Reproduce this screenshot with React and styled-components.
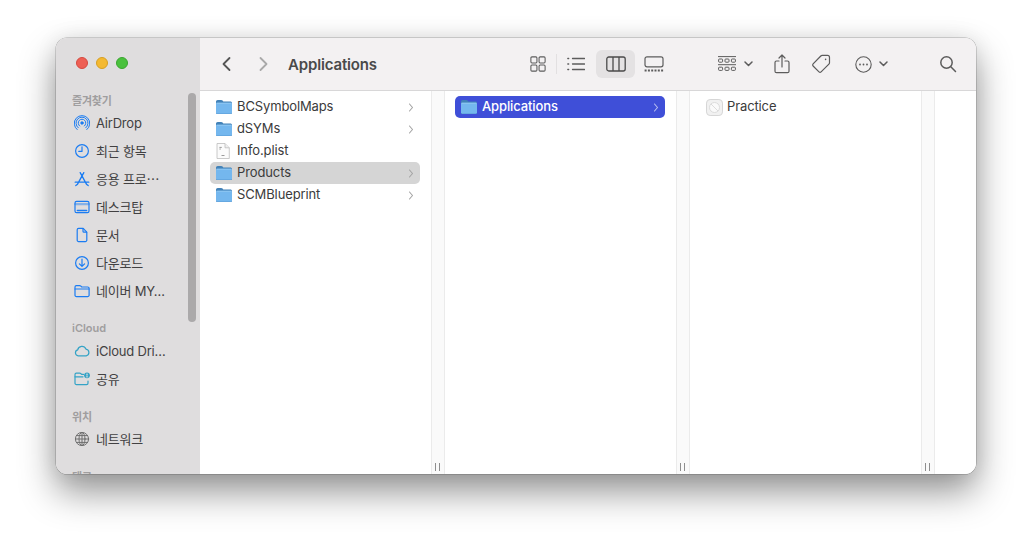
import styled, { createGlobalStyle } from "styled-components";

const GlobalStyle = createGlobalStyle`
  html, body {
    margin: 0;
    background: #fff;
    overflow: hidden;
  }
  body {
    font-family: Inter, "Noto Sans CJK KR", "Liberation Sans", sans-serif;
    -webkit-font-smoothing: antialiased;
  }
  * { box-sizing: border-box; }
`;

const Stroke = ({ size = 16, vb, color = "currentColor", width = 1.2, children }) => (
  <svg width={size} height={size} viewBox={vb || `0 0 ${size} ${size}`} fill="none" stroke={color} strokeWidth={width} strokeLinecap="round" strokeLinejoin="round">
    {children}
  </svg>
);

// sidebar icons
const AirDropIcon = () => (
  <Stroke width={1}>
    <circle cx="8" cy="8" r="1.2" fill="currentColor" />
    <path d="M5.6 11a3.8 3.8 0 1 1 4.8 0" />
    <path d="M4.2 12.8a6 6 0 1 1 7.6 0" />
    <path d="M3.2 14.6a7.8 7.8 0 1 1 9.6 0" />
  </Stroke>
);
const ClockIcon = () => (
  <Stroke>
    <circle cx="8" cy="8" r="6.4" />
    <path d="M8 3.8V8.4H4.8" />
  </Stroke>
);
const AppsIcon = () => (
  <Stroke width={1.3}>
    <path d="M9.8 1.6 3.4 13.4M6.2 1.6l6.4 11.8M1.2 11.2h13.6M1.8 14.6l1.4-1.2M14.2 14.6l-1.4-1.2" />
  </Stroke>
);
const DesktopIcon = () => (
  <Stroke>
    <rect x="1" y="2.4" width="14" height="11.2" rx="1.6" />
    <path d="M1.4 5.2h13.2" strokeWidth="2.2" opacity=".45" />
    <path d="M3.4 11.4h9.2" strokeWidth="1.5" />
  </Stroke>
);
const DocIcon = () => (
  <Stroke>
    <path d="M4.6 1.4h4.6l3.6 3.8v8a1.4 1.4 0 0 1-1.4 1.4H4.6a1.4 1.4 0 0 1-1.4-1.4V2.8a1.4 1.4 0 0 1 1.4-1.4Z" />
    <path d="M9 1.6v2.6a1 1 0 0 0 1 1h2.6" />
  </Stroke>
);
const DownloadIcon = () => (
  <Stroke>
    <circle cx="8" cy="8" r="6.4" />
    <path d="M8 4.2v7M5.4 8.8 8 11.4l2.6-2.6" />
  </Stroke>
);
const FolderLine = () => (
  <Stroke>
    <path d="M1 4a1.4 1.4 0 0 1 1.4-1.4h3.2c.6 0 .9.2 1.3.6l.8.8h6a1.4 1.4 0 0 1 1.4 1.4v6.8a1.4 1.4 0 0 1-1.4 1.4H2.4A1.4 1.4 0 0 1 1 12.2Z" />
    <path d="M1 6h14" />
  </Stroke>
);
const CloudIcon = () => (
  <Stroke>
    <path d="M4.2 12.8a3 3 0 0 1-.5-5.9 4.3 4.3 0 0 1 8.2-.8 3.4 3.4 0 0 1 .3 6.7Z" />
  </Stroke>
);
const SharedIcon = () => (
  <Stroke>
    <path d="M9.5 3.4H7.6l-.9-.9c-.3-.3-.6-.4-1-.4H2.4A1.4 1.4 0 0 0 1 3.5v8.700a1.400 1.400 0 0 0 1.400 1.400h10.200a1.400 1.400 0 0 0 1.400-1.400V10" />
    <path d="M1 5.800h8" />
    <circle cx="13" cy="4.300" r="2.900" fill="currentColor" stroke="none" />
    <circle cx="13" cy="3.300" r=".8" fill="#dfddde" stroke="none" />
    <path d="M13 4.800v1.300" stroke="#dfddde" />
  </Stroke>
);
const GlobeIcon = () => (
  <Stroke width={1}>
    <circle cx="8" cy="8" r="6.600" />
    <ellipse cx="8" cy="8" rx="3" ry="6.600" />
    <path d="M1.400 8h13.200M2.400 4.600h11.200M2.400 11.400h11.200M8 1.400v13.200" />
  </Stroke>
);

// file list icons
const FolderIcon = () => (
  <svg width="16" height="14" viewBox="0 0 16 14">
    <path d="M0 1.800C0 .8.700 0 1.700 0h3.500c.6 0 1 .2 1.400.6l.7.8h7c1 0 1.700.7 1.700 1.600v2.500H0Z" fill="#4282b8" />
    <rect x="0" y="2.700" width="16" height="11.300" rx="1.400" fill="#74b7ee" />
    <path d="M0 13c0 .6.600 1 1.400 1h13.200c.8 0 1.400-.4 1.400-1" fill="none" stroke="#4f93cb" strokeWidth=".8" />
    <path d="M.4 3.200h15.200" stroke="#9fd0f6" strokeWidth=".7" />
  </svg>
);
const PlistIcon = () => (
  <svg width="14" height="16" viewBox="0 0 14 16" fill="none">
    <path d="M1 .5h8l4.300 4.300V15.500H1Z" fill="#fbfbfb" stroke="#bcbcbc" strokeWidth=".8" />
    <path d="M9 .6v4.200h4.200" fill="#eee" stroke="#bcbcbc" strokeWidth=".8" />
    <path d="M3.400 4.400h2.400M3.400 6h1.400M5.500 12.500h3" stroke="#8f8f8f" strokeWidth=".9" />
  </svg>
);
const AppPlaceholder = () => (
  <svg width="17" height="17" viewBox="0 0 17 17" fill="none">
    <rect x=".5" y=".5" width="16" height="16" rx="3.600" fill="#f1f1f1" stroke="#d6d6d6" />
    <circle cx="8.500" cy="8.500" r="5" fill="#fafafa" stroke="#dcdcdc" />
    <path d="m5 5 7 7" stroke="#dcdcdc" />
  </svg>
);
const RowChevron = () => (
  <svg width="6" height="9" viewBox="0 0 6 9" fill="none" stroke="currentColor" strokeWidth="1.100" strokeLinecap="round" strokeLinejoin="round">
    <path d="m1.500 1 3 3.500-3 3.500" />
  </svg>
);
const SmallChevron = () => (
  <svg width="9" height="6" viewBox="0 0 9 6" fill="none" stroke="#5c5c5c" strokeWidth="1.500" strokeLinecap="round" strokeLinejoin="round">
    <path d="m1 1 3.500 3.500L8 1" />
  </svg>
);

const favorites = [
  { icon: <AirDropIcon />, label: "AirDrop" },
  { icon: <ClockIcon />, label: "최근 항목" },
  { icon: <AppsIcon />, label: "응용 프로⋯" },
  { icon: <DesktopIcon />, label: "데스크탑" },
  { icon: <DocIcon />, label: "문서" },
  { icon: <DownloadIcon />, label: "다운로드" },
  { icon: <FolderLine />, label: "네이버 MY…" },
];
const icloud = [
  { icon: <CloudIcon />, label: "iCloud Dri…" },
  { icon: <SharedIcon />, label: "공유" },
];

const columns = [
  [
    { name: "BCSymbolMaps", kind: "folder" },
    { name: "dSYMs", kind: "folder" },
    { name: "Info.plist", kind: "plist" },
    { name: "Products", kind: "folder", state: "muted" },
    { name: "SCMBlueprint", kind: "folder" },
  ],
  [{ name: "Applications", kind: "folder", state: "active" }],
  [{ name: "Practice", kind: "app" }],
];

const isHangul = (text) => /[가-힣]/.test(text);

function SideSection({ title, items, tint }) {
  return (
    <Section>
      <SectionTitle $hangul={isHangul(title)}>{title}</SectionTitle>
      {items.map((item) => (
        <SideRow key={item.label}>
          <SideIcon $tint={tint}>{item.icon}</SideIcon>
          <SideLabel $hangul={isHangul(item.label)}>{item.label}</SideLabel>
        </SideRow>
      ))}
    </Section>
  );
}

function FileRow({ file }) {
  return (
    <Row $state={file.state}>
      <RowIcon>
        {file.kind === "folder" && <FolderIcon />}
        {file.kind === "plist" && <PlistIcon />}
        {file.kind === "app" && <AppPlaceholder />}
      </RowIcon>
      <RowName>{file.name}</RowName>
      {file.kind === "folder" && (
        <ChevronSlot $state={file.state}>
          <RowChevron />
        </ChevronSlot>
      )}
    </Row>
  );
}

export default function App() {
  return (
    <>
      <GlobalStyle />
      <Page>
        <Window>
          <Sidebar>
            <Lights>
              <Light $color="#ee5f54" $edge="#d5493f" />
              <Light $color="#f4b931" $edge="#d79f22" />
              <Light $color="#4ac13d" $edge="#3aa52f" />
            </Lights>
            <SideSection title="즐겨찾기" items={favorites} tint="#1b7cf2" />
            <SideSection title="iCloud" items={icloud} tint="#35a3c6" />
            <SideSection title="위치" items={[{ icon: <GlobeIcon />, label: "네트워크" }]} tint="#6e6e6e" />
            <SideSection title="태그" items={[]} />
            <SideScrollbar />
          </Sidebar>
          <Main>
            <Toolbar>
              <ToolButton $w={36}>
                <Stroke size={18} width={1.8} color="#555"><path d="M11.500 3 5.500 9l6 6" /></Stroke>
              </ToolButton>
              <ToolButton $w={36}>
                <Stroke size={18} width={1.8} color="#a9a9a9"><path d="m6.500 3 6 6-6 6" /></Stroke>
              </ToolButton>
              <Title>Applications</Title>

              <ToolButton $w={36}>
                <Stroke size={16} vb="0 0 18 18" width={1.200} color="#5c5c5c">
                  <rect x="1" y="1" width="6.800" height="6.800" rx="1.200" />
                  <rect x="10.200" y="1" width="6.800" height="6.800" rx="1.200" />
                  <rect x="1" y="10.200" width="6.800" height="6.800" rx="1.200" />
                  <rect x="10.200" y="10.200" width="6.800" height="6.800" rx="1.200" />
                </Stroke>
              </ToolButton>
              <ViewDivider />
              <ToolButton $w={37}>
                <Stroke size={18} width={1.300} color="#5c5c5c">
                  <path d="M5.500 3.500h12M5.500 9h12M5.500 14.500h12M.8 3.500h.9M.8 9h.9M.8 14.500h.9" />
                </Stroke>
              </ToolButton>
              <ToolButton $w={39} $offset={2} $active>
                <svg width="20" height="16" viewBox="0 0 20 16" fill="none" stroke="#4a4a4a" strokeWidth="1.300">
                  <rect x=".8" y="1" width="18.400" height="14" rx="2" />
                  <path d="M7 1v14M13 1v14" />
                </svg>
              </ToolButton>
              <ToolButton $w={37}>
                <svg width="20" height="16" viewBox="0 0 20 16" fill="none" stroke="#5c5c5c" strokeWidth="1.200">
                  <rect x="1" y=".8" width="18" height="10" rx="2" />
                  <path d="M.6 14.500h18.800" strokeWidth="1.800" strokeDasharray="2 1.300" />
                </svg>
              </ToolButton>

              <ToolButton $w={44} $offset={41}>
                <ChevronPair $gap={8}>
                  <svg width="18" height="16" viewBox="0 0 18 16" fill="none" stroke="#5c5c5c" strokeWidth="1">
                    <path d="M0 .6h18M0 8.700h18" />
                    <rect x=".6" y="3" width="4" height="3.200" rx=".8" />
                    <rect x="7" y="3" width="4" height="3.200" rx=".8" />
                    <rect x="13.400" y="3" width="4" height="3.200" rx=".8" />
                    <rect x=".6" y="11.200" width="4" height="3.200" rx=".8" />
                    <rect x="7" y="11.200" width="4" height="3.200" rx=".8" />
                    <rect x="13.400" y="11.200" width="4" height="3.200" rx=".8" />
                  </svg>
                  <SmallChevron />
                </ChevronPair>
              </ToolButton>
              <ToolButton $w={38} $offset={6}>
                <svg width="16" height="20" viewBox="0 0 16 20" fill="none" stroke="#5c5c5c" strokeWidth="1.200" strokeLinecap="round" strokeLinejoin="round">
                  <path d="M5 7H2.500A1.500 1.500 0 0 0 1 8.500v8.700a1.500 1.500 0 0 0 1.500 1.500h11a1.500 1.500 0 0 0 1.500-1.500V8.500A1.500 1.500 0 0 0 13.500 7H11" />
                  <path d="M8 13V1.200M5 4l3-3 3 3" />
                </svg>
              </ToolButton>
              <ToolButton $w={38} $offset={1}>
                <svg width="20" height="20" viewBox="0 0 20 20" fill="none" stroke="#5c5c5c" strokeWidth="1.200" strokeLinejoin="round">
                  <path d="M11.200 1.400h5.300a2 2 0 0 1 2 2v5.300c0 .5-.2 1-.6 1.400l-7.800 7.800a1.500 1.500 0 0 1-2.100 0l-5.900-5.900a1.500 1.500 0 0 1 0-2.100l7.700-7.900c.4-.4.900-.6 1.400-.6Z" />
                  <circle cx="14.600" cy="5.400" r=".8" fill="#5c5c5c" stroke="none" />
                </svg>
              </ToolButton>
              <ToolButton $w={45} $offset={9}>
                <ChevronPair $gap={7}>
                  <svg width="17" height="17" viewBox="0 0 17 17" fill="none" stroke="#5c5c5c" strokeWidth="1.100">
                    <circle cx="8.500" cy="8.500" r="7.700" />
                    <circle cx="5" cy="8.500" r=".9" fill="#5c5c5c" stroke="none" />
                    <circle cx="8.500" cy="8.500" r=".9" fill="#5c5c5c" stroke="none" />
                    <circle cx="12" cy="8.500" r=".9" fill="#5c5c5c" stroke="none" />
                  </svg>
                  <SmallChevron />
                </ChevronPair>
              </ToolButton>
              <SearchSlot>
                <Stroke size={18} width={1.500} color="#5c5c5c">
                  <circle cx="7.500" cy="7.500" r="5.700" />
                  <path d="m11.800 11.800 4.700 4.700" />
                </Stroke>
              </SearchSlot>
            </Toolbar>
            <Browser>
              {columns.map((files, i) => (
                <ColumnWrap key={i}>
                  <Column>
                    {files.map((file) => (
                      <FileRow key={file.name} file={file} />
                    ))}
                  </Column>
                  <ResizeStrip>
                    <Grip />
                  </ResizeStrip>
                </ColumnWrap>
              ))}
              <Filler />
            </Browser>
          </Main>
        </Window>
      </Page>
    </>
  );
}

const Page = styled.div`
  width: 1032px;
  height: 548px;
  padding: 38px 56px 74px;
`;

const Window = styled.div`
  display: flex;
  width: 920px;
  height: 436px;
  border-radius: 11px;
  overflow: hidden;
  background: #fff;
  box-shadow: 0 0 0 0.5px rgba(0, 0, 0, 0.28), 0 18px 36px rgba(0, 0, 0, 0.42), 0 0 22px rgba(0, 0, 0, 0.08);
`;

const Sidebar = styled.aside`
  position: relative;
  flex: 0 0 144px;
  height: 436px;
  overflow: hidden;
  background: #dfddde;
`;

const Lights = styled.div`
  display: flex;
  gap: 8px;
  height: 54px;
  padding: 19px 0 0 20px;
`;

const Light = styled.span`
  width: 12px;
  height: 12px;
  border-radius: 50%;
  background: ${(p) => p.$color};
  border: 0.5px solid ${(p) => p.$edge};
`;

const Section = styled.section`
  margin-bottom: 15px;
`;

const SectionTitle = styled.div`
  height: 16px;
  margin-bottom: 1px;
  padding: ${(p) => (p.$hangul ? "1px" : "0")} 0 0 16px;
  font-size: 11px;
  font-weight: 600;
  line-height: 16px;
  letter-spacing: ${(p) => (p.$hangul ? "-0.2px" : "0")};
  color: #a09e9f;
`;

const SideRow = styled.div`
  display: flex;
  align-items: center;
  gap: 4px;
  height: 28px;
  padding-left: 16px;
  font-size: 13px;
  color: #424142;
  white-space: nowrap;
`;

const SideLabel = styled.span`
  padding-bottom: ${(p) => (p.$hangul ? "2px" : "0")};
  letter-spacing: -0.2px;
`;

const SideIcon = styled.span`
  display: flex;
  align-items: center;
  justify-content: center;
  width: 20px;
  height: 20px;
  color: ${(p) => p.$tint};
`;

const SideScrollbar = styled.div`
  position: absolute;
  top: 55px;
  left: 132px;
  width: 8px;
  height: 229px;
  border-radius: 4px;
  background: #aba9aa;
`;

const Main = styled.main`
  display: flex;
  flex: 1;
  flex-direction: column;
  min-width: 0;
`;

const Toolbar = styled.header`
  display: flex;
  flex: 0 0 53px;
  align-items: center;
  padding-left: 9px;
  background: #f3f1f2;
  border-bottom: 1px solid #d8d7d8;
`;

const ToolButton = styled.div`
  display: flex;
  flex: 0 0 ${(p) => p.$w}px;
  align-items: center;
  justify-content: center;
  height: 28px;
  margin-left: ${(p) => p.$offset || 0}px;
  border-radius: 6px;
  background: ${(p) => (p.$active ? "#e4e2e3" : "transparent")};
`;

const ChevronPair = styled.div`
  display: flex;
  align-items: center;
  gap: ${(p) => p.$gap}px;
`;

const Title = styled.h1`
  flex: 0 0 232px;
  margin: 0 0 0 7px;
  font-size: 15px;
  font-weight: 600;
  letter-spacing: -0.15px;
  color: #4a4a4a;
`;

const ViewDivider = styled.span`
  flex: 0 0 1px;
  height: 20px;
  background: #e2e0e1;
`;

const SearchSlot = styled.div`
  display: flex;
  align-items: center;
  justify-content: center;
  width: 30px;
  height: 28px;
  margin-left: auto;
  margin-right: 13px;
`;

const Browser = styled.div`
  display: flex;
  flex: 1;
  min-height: 0;
`;

const ColumnWrap = styled.div`
  display: flex;
  flex: 0 0 245px;
`;

const Column = styled.div`
  flex: 0 0 231px;
  padding: 5px 11px 0 10px;
`;

const Row = styled.div`
  display: flex;
  align-items: center;
  height: 22px;
  padding: 0 6px;
  border-radius: 5px;
  font-size: 13px;
  color: ${(p) => (p.$state === "active" ? "#fff" : "#3b3b3b")};
  font-weight: ${(p) => (p.$state === "active" ? 500 : 400)};
  background: ${(p) =>
    p.$state === "active" ? "#3f4fd8" : p.$state === "muted" ? "#d5d5d5" : "transparent"};
`;

const RowIcon = styled.span`
  display: flex;
  flex: 0 0 17px;
  align-items: center;
  justify-content: flex-start;
  margin-right: 4px;
`;

const RowName = styled.span`
  flex: 1;
  padding-bottom: 2px;
  letter-spacing: -0.12px;
  white-space: nowrap;
`;

const ChevronSlot = styled.span`
  display: flex;
  color: ${(p) => (p.$state === "active" ? "#b9c0f0" : "#a3a3a3")};
`;

const ResizeStrip = styled.div`
  position: relative;
  flex: 0 0 14px;
  background: #fafafa;
  border-left: 1px solid #ebebeb;
  border-right: 1px solid #ebebeb;
`;

const Grip = styled.span`
  position: absolute;
  bottom: 3px;
  left: 3px;
  width: 5px;
  height: 8px;
  border-left: 1px solid #8e8e8e;
  border-right: 1px solid #8e8e8e;
`;

const Filler = styled.div`
  flex: 1;
  background: #fff;
`;
